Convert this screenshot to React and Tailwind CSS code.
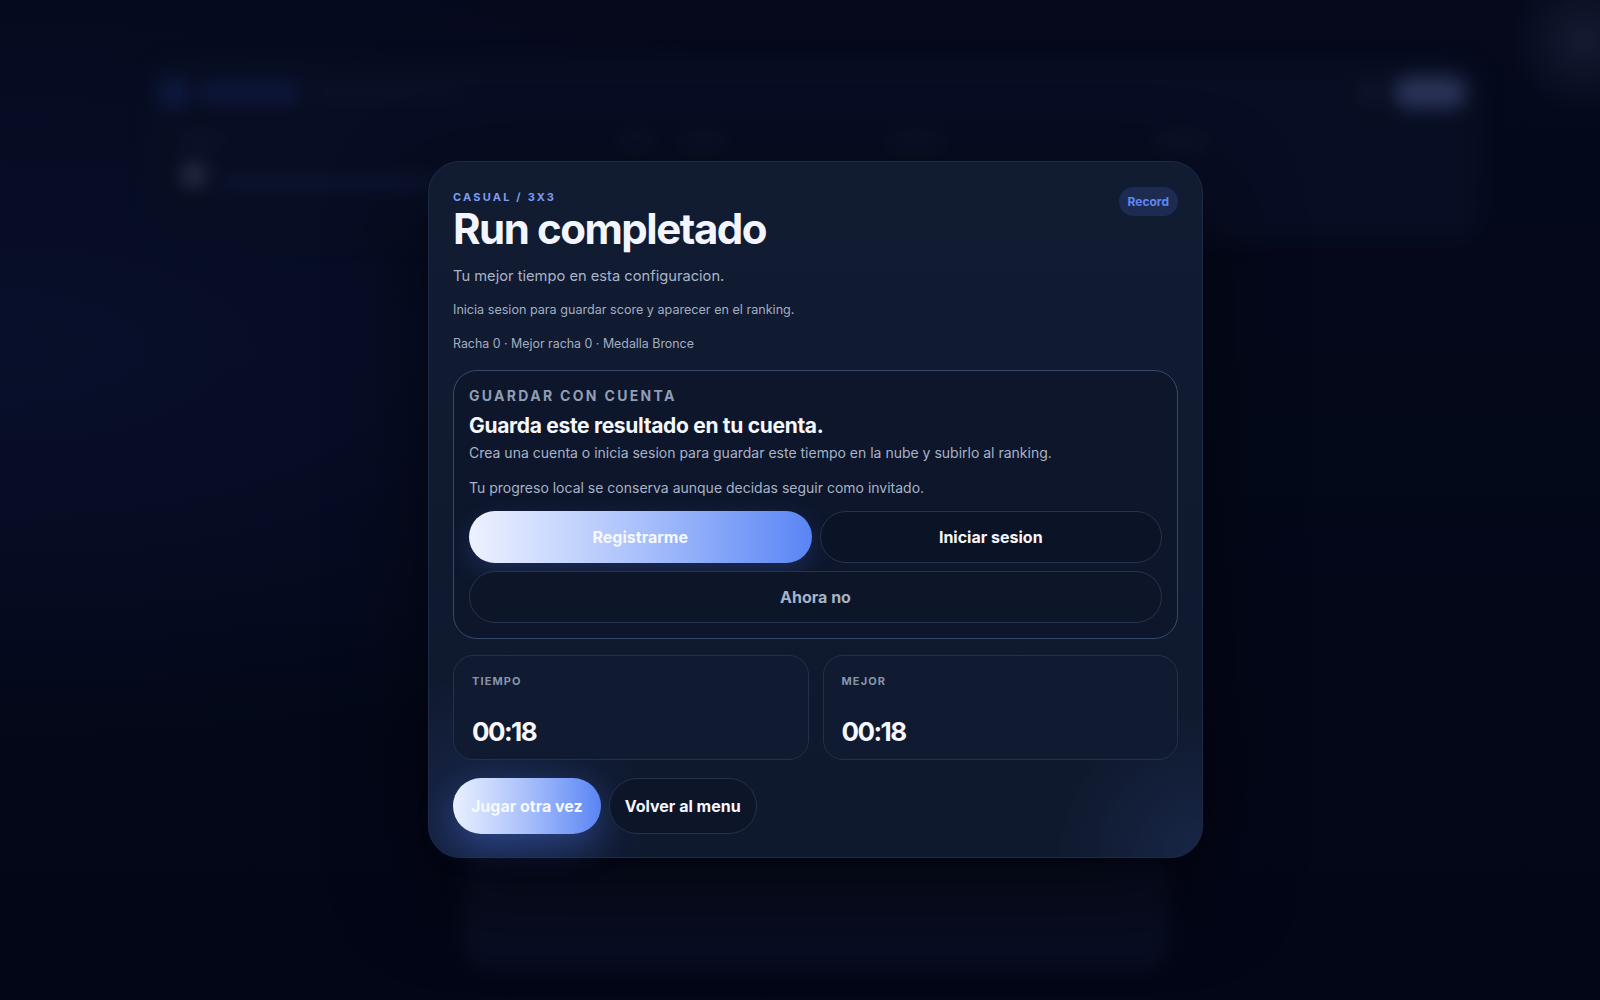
import React from "react";

function BackdropApp() {
  return (
    <div className="flex flex-col items-center pl-[31px] pt-[61px] blur-[9px]">
      {/* header + leaderboard panel */}
      <div className="w-[1332px] h-[179px] rounded-[28px] bg-[#0a1127] border border-[#121b36] px-[10px] pt-[15px]">
        <div className="flex items-center justify-between">
          <div className="flex items-center gap-3">
            <div className="w-[26px] h-[26px] rounded-lg bg-[#142457]" />
            <div className="w-[100px] h-[18px] rounded-full bg-[#132050]" />
            <div className="w-[150px] h-[8px] rounded-full bg-[#0f1734]" />
          </div>
          <div className="flex items-center gap-[14px] pr-[5px]">
            <div className="w-[20px] h-[20px] rounded-full bg-[#161f3c]" />
            <div className="w-[72px] h-[31px] rounded-full bg-[#3b4773]" />
          </div>
        </div>
        <div className="mt-[28px] grid grid-cols-[440px_270px_265px_1fr] pl-[20px]">
          <div className="w-[40px] h-[10px] rounded bg-[#121a36]" />
          <div className="flex gap-8">
            <div className="w-[30px] h-[10px] rounded bg-[#121a36]" />
            <div className="w-[40px] h-[10px] rounded bg-[#121a36]" />
          </div>
          <div className="w-[50px] h-[10px] rounded bg-[#121a36]" />
          <div className="w-[50px] h-[10px] rounded bg-[#121a36]" />
        </div>
        <div className="mt-[18px] flex items-center gap-4 pl-[22px]">
          <div className="w-[22px] h-[22px] rounded-md bg-[#3a4260]" />
          <div className="w-[220px] h-[6px] rounded-full bg-[#16265a] mt-[16px]" />
        </div>
      </div>
      {/* lower panel peeking below the dialog */}
      <div className="mt-[617px] w-[704px] h-[112px] rounded-[24px] bg-[#0b1127] border border-[#111934]" />
    </div>
  );
}

function ResultDialog() {
  return (
    <div className="w-[775px] rounded-[32px] border border-[#1e2a45] bg-[radial-gradient(circle_at_100%_100%,rgba(60,90,170,0.2),transparent_14%),radial-gradient(circle_at_8%_96%,rgba(70,110,220,0.18),transparent_16%),linear-gradient(180deg,#111b31,#0f192e)] px-[24px] pt-[25px] pb-[23px] shadow-[0_30px_90px_rgba(0,0,0,0.55)]">
      <div className="flex items-start justify-between">
        <div>
          <div className="text-[11px] leading-5 font-bold tracking-[0.2em] text-[#7e9cf3]">
            CASUAL / 3X3
          </div>
          <h1 className="mt-[1px] text-[42px] leading-[42px] font-bold tracking-[-0.035em] text-[#f2f5fd]">
            Run completado
          </h1>
        </div>
        <span className="h-[29px] px-[9px] rounded-full bg-[#1d2b52] text-[12px] leading-[29px] font-bold text-[#5f87f0]">
          Record
        </span>
      </div>

      <p className="mt-[14px] text-[14.7px] leading-6 text-[#a9b4c9]">
        Tu mejor tiempo en esta configuracion.
      </p>
      <p className="mt-[12px] text-[12.6px] leading-5 text-[#a3aec3]">
        Inicia sesion para guardar score y aparecer en el ranking.
      </p>
      <p className="mt-[14px] text-[12.4px] leading-5 text-[#a3aec3]">
        Racha 0 · Mejor racha 0 · Medalla Bronce
      </p>

      <section className="mt-4 rounded-[24px] border border-[#38486a] bg-[#0d162b] p-[15px]">
        <div className="text-[14px] leading-5 font-bold tracking-[0.165em] text-[#909db5]">
          GUARDAR CON CUENTA
        </div>
        <h2 className="mt-[6px] text-[21px] leading-[28px] font-bold tracking-[-0.015em] text-[#f5f7fc]">
          Guarda este resultado en tu cuenta.
        </h2>
        <p className="mt-[3px] text-[14px] leading-5 text-[#a8b3c7]">
          Crea una cuenta o inicia sesion para guardar este tiempo en la nube y subirlo al ranking.
        </p>
        <p className="mt-[15px] text-[14px] leading-5 text-[#a8b3c7]">
          Tu progreso local se conserva aunque decidas seguir como invitado.
        </p>
        <div className="mt-[13px] grid grid-cols-2 gap-2">
          <button className="h-[52px] rounded-full bg-linear-to-r from-[#eef2ff] via-[#a9c0fb] to-[#5a84f4] text-[16px] font-bold text-[#f7f9ff] shadow-[0_8px_24px_rgba(80,120,240,0.22)]">
            Registrarme
          </button>
          <button className="h-[52px] rounded-full border border-[#27324c] bg-[#0b1326] text-[16px] font-bold text-[#f5f7fc]">
            Iniciar sesion
          </button>
        </div>
        <button className="mt-2 w-full h-[52px] rounded-full border border-[#27324c] bg-[#0d1629] text-[16px] font-bold text-[#a7b2c6]">
          Ahora no
        </button>
      </section>

      <div className="mt-4 grid grid-cols-2 gap-[14px]">
        {[
          ["TIEMPO", "00:18"],
          ["MEJOR", "00:18"],
        ].map(([label, value]) => (
          <div
            key={label}
            className="h-[105px] rounded-[20px] border border-[#24304b] bg-[#101a30] px-[18px] pt-[17px]"
          >
            <div className="text-[11px] leading-4 font-bold tracking-[0.1em] text-[#8794ad]">
              {label}
            </div>
            <div className="mt-[27px] text-[26px] leading-8 font-bold tracking-[-0.06em] text-[#f5f7fc]">
              {value}
            </div>
          </div>
        ))}
      </div>

      <div className="mt-[18px] flex gap-2">
        <button className="h-[56px] px-[18px] rounded-full bg-linear-to-r from-[#eaf0ff] via-[#a8bffa] to-[#5a84f4] text-[16px] font-bold text-[#f7f9ff] shadow-[0_12px_34px_rgba(80,120,240,0.35)]">
          Jugar otra vez
        </button>
        <button className="h-[56px] px-[15px] rounded-full border border-[#26314a] bg-[#0d1528] text-[16px] font-bold text-[#f5f7fc]">
          Volver al menu
        </button>
      </div>
    </div>
  );
}

export default function App() {
  return (
    <div className="relative w-[1600px] h-[1000px] overflow-hidden font-['Inter',sans-serif] bg-[radial-gradient(ellipse_at_0%_35%,#0b1434,transparent_45%),radial-gradient(circle_at_99%_4%,rgba(70,80,120,0.35),transparent_4%),linear-gradient(180deg,#060b1f,#030716)]">
      <BackdropApp />
      <div className="absolute inset-0 bg-[#020617]/30 flex items-start justify-center pl-[31px] pt-[161px]">
        <ResultDialog />
      </div>
    </div>
  );
}
